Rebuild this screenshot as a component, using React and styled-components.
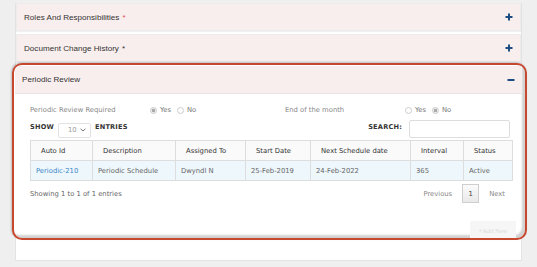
import React from 'react'
import styled, { createGlobalStyle } from 'styled-components'

const Global = createGlobalStyle`
  html, body {
    margin: 0;
    padding: 0;
    background: #efefef;
  }
  body {
    font-family: "DejaVu Sans", Verdana, sans-serif;
    overflow: hidden;
  }
`

const Page = styled.div`
  width: 537px;
  height: 267px;
  overflow: hidden;
  padding: 3px 15px 0 15px;
  box-sizing: border-box;
`

const Container = styled.div`
  background: #ffffff;
  border: 1px solid #e4e4e4;
  border-top: none;
  height: 258px;
  box-sizing: border-box;
  display: flex;
  flex-direction: column;
  gap: 3px;
`

const Panel = styled.div`
  background: #ffffff;
  border: 1px solid #ececec;
  box-shadow: 0 1px 1px rgba(0, 0, 0, 0.06);
`

const PanelHeader = styled.div`
  height: ${p => p.h || 26}px;
  background: #f9eeee;
  display: flex;
  align-items: center;
  justify-content: space-between;
  padding: 0 7px 0 7px;
  font-family: "Liberation Sans", Arial, sans-serif;
  font-size: 8.1px;
  color: #333;
  border-bottom: ${p => (p.open ? '1px solid #ece4e4' : 'none')};
`

const Req = styled.span`
  color: ${p => p.color || '#d9534f'};
  margin-left: 3px;
`

const Highlight = styled.div`
  margin: -2px -6px 0 -4px;
  padding: 1px 3px 0 1px;
  border: 2px solid #c8472f;
  border-radius: 10px;
  height: 172px;
  overflow: hidden;
  box-shadow: inset -3px -3px 2px rgba(0, 0, 0, 0.18), -1px -1px 2px rgba(0, 0, 0, 0.2);
  background: #ffffff;
`

const Body = styled.div`
  padding: 10px 10px 0 15px;
  font-size: 6.8px;
  color: #555;
`

const OptionRow = styled.div`
  display: grid;
  grid-template-columns: 120px 135px 120px auto;
  align-items: center;
  color: #888;
  height: 12px;
`

const Radios = styled.div`
  display: flex;
  align-items: center;
  gap: 3px;
  color: #777;
`

const Radio = styled.span`
  width: 5px;
  height: 5px;
  border-radius: 50%;
  border: 1px solid #ccc;
  background: ${p => (p.checked ? 'radial-gradient(circle, #aaa 0 45%, #eee 55%)' : '#fff')};
  margin-left: ${p => p.gap || 0}px;
`

const Controls = styled.div`
  display: flex;
  align-items: center;
  justify-content: space-between;
  margin-top: 2px;
  height: 18px;
  padding-right: 2px;
`

const Label = styled.span`
  font-weight: bold;
  color: #333;
  font-size: 6.6px;
  letter-spacing: 0.2px;
`

const ShowGroup = styled.div`
  display: flex;
  align-items: center;
  gap: 4px;
`

const Select = styled.div`
  width: 33px;
  height: 15px;
  border: 1px solid #e2e2e2;
  border-radius: 2px;
  display: flex;
  align-items: center;
  justify-content: space-between;
  padding: 0 4px 0 9px;
  box-sizing: border-box;
  color: #999;
  margin-top: 6px;
`

const SearchInput = styled.div`
  width: 99px;
  height: 16px;
  border: 1px solid #ddd;
  border-radius: 2px;
  margin-left: 3px;
  margin-top: 4px;
`

const Table = styled.table`
  width: 482px;
  table-layout: fixed;
  border-collapse: collapse;
  margin-top: 4px;
  font-size: 6.8px;
  th, td {
    border: 1px solid #ddd;
    text-align: left;
    padding: 0 0 0 5px;
    font-weight: normal;
    white-space: nowrap;
  }
  th {
    height: 19px;
    background: #fafafa;
    color: #333;
    padding-left: 10px;
  }
  td {
    height: 19px;
    background: #eef7fc;
    color: #666;
  }
`

const Cell = styled.td`
  && {
    color: ${p => (p.link ? '#3b86c9' : '#666')};
  }
`

const Footer = styled.div`
  display: flex;
  align-items: center;
  justify-content: space-between;
  margin-top: 3px;
  padding-right: 7px;
  color: #666;
`

const Pager = styled.div`
  display: flex;
  align-items: center;
  gap: 10px;
  color: #888;
`

const PageButton = styled.span`
  width: 17px;
  height: 19px;
  box-sizing: border-box;
  border: 1px solid #cfcfcf;
  background: linear-gradient(#fbfbfb, #e9e9e9);
  display: flex;
  align-items: center;
  justify-content: center;
  color: #444;
`

const AddRow = styled.div`
  display: flex;
  justify-content: flex-end;
  margin: 18px -4px 0 0;
`

const AddButton = styled.span`
  width: 46px;
  height: 18px;
  background: #f6f6f6;
  color: #d8d8d8;
  font-family: "Liberation Serif", serif;
  font-size: 6.5px;
  display: flex;
  align-items: center;
  justify-content: center;
`

const Toggle = ({ open }) => (
  <svg width="8" height="8" viewBox="0 0 8 8">
    <path d="M0.5 4 H7.5" stroke="#1d4d80" strokeWidth="2" />
    {!open && <path d="M4 0.5 V7.5" stroke="#1d4d80" strokeWidth="2" />}
  </svg>
)

const Chevron = () => (
  <svg width="6" height="4" viewBox="0 0 6 4">
    <path d="M0.6 0.8 L3 3 L5.4 0.8" fill="none" stroke="#777" strokeWidth="1" />
  </svg>
)

const rows = [
  ['Periodic-210', 'Periodic Schedule', 'Dwyndl N', '25-Feb-2019', '24-Feb-2022', '365', 'Active'],
]

const cols = [
  ['Auto Id', 62],
  ['Description', 83],
  ['Assigned To', 70],
  ['Start Date', 65],
  ['Next Schedule date', 100],
  ['Interval', 53],
  ['Status', 49],
]

export default function App() {
  return (
    <Page>
      <Global />
      <Container>
        <Panel>
          <PanelHeader>
            <span>Roles And Responsibilities<Req>*</Req></span>
            <Toggle />
          </PanelHeader>
        </Panel>
        <Panel>
          <PanelHeader>
            <span>Document Change History<Req color="#333">*</Req></span>
            <Toggle />
          </PanelHeader>
        </Panel>
        <Highlight>
          <PanelHeader h={27} open>
            <span>Periodic Review</span>
            <Toggle open />
          </PanelHeader>
          <Body>
            <OptionRow>
              <span>Periodic Review Required</span>
              <Radios>
                <Radio checked /> Yes <Radio gap={3} /> No
              </Radios>
              <span>End of the month</span>
              <Radios>
                <Radio /> Yes <Radio checked gap={3} /> No
              </Radios>
            </OptionRow>
            <Controls>
              <ShowGroup>
                <Label>SHOW</Label>
                <Select>10 <Chevron /></Select>
                <Label>ENTRIES</Label>
              </ShowGroup>
              <ShowGroup>
                <Label>SEARCH:</Label>
                <SearchInput />
              </ShowGroup>
            </Controls>
            <Table>
              <colgroup>
                {cols.map(([c, w]) => (
                  <col key={c} width={w} />
                ))}
              </colgroup>
              <thead>
                <tr>
                  {cols.map(([c]) => (
                    <th key={c}>{c}</th>
                  ))}
                </tr>
              </thead>
              <tbody>
                {rows.map(r => (
                  <tr key={r[0]}>
                    {r.map((v, i) => (
                      <Cell key={i} link={i === 0}>{v}</Cell>
                    ))}
                  </tr>
                ))}
              </tbody>
            </Table>
            <Footer>
              <span>Showing 1 to 1 of 1 entries</span>
              <Pager>
                <span>Previous</span>
                <PageButton>1</PageButton>
                <span>Next</span>
              </Pager>
            </Footer>
            <AddRow>
              <AddButton>+Add New</AddButton>
            </AddRow>
          </Body>
        </Highlight>
      </Container>
    </Page>
  )
}
